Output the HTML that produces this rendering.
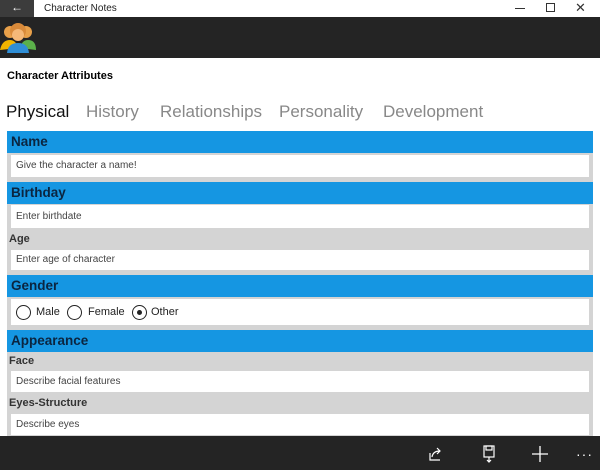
<!DOCTYPE html>
<html><head><style>
*{margin:0;padding:0;box-sizing:border-box}
body{width:600px;height:470px;overflow:hidden;background:#fff;font-family:"Liberation Sans",sans-serif;position:relative}
.a{position:absolute}
.hdr{position:absolute;left:7px;width:586px;background:#1596e2;color:#0b2540;font-weight:bold;font-size:13.5px;padding-left:4px;line-height:22px}
.gr{position:absolute;left:7px;width:586px;background:#d4d4d4}
.tb{position:absolute;left:11px;width:578px;background:#fff;font-size:10px;color:#444;padding-left:5px}
.lb{position:absolute;left:9px;font-size:11px;font-weight:bold;color:#333}
.tab{position:absolute;top:102px;font-size:17px;color:#888}
.rd{position:absolute;top:6px;width:15px;height:15px;border:1.5px solid #222;border-radius:50%}
.rt{position:absolute;top:0;font-size:11px;color:#222}
</style></head><body>
<div class="a" style="left:0;top:0;width:34px;height:17px;background:#3c3c3c;color:#fff;font-size:12px;text-align:center;line-height:15px">←</div>
<div class="a" style="left:44px;top:3px;font-size:10px;color:#222">Character Notes</div>
<div class="a" style="left:515px;top:8px;width:10px;height:1px;background:#333"></div>
<div class="a" style="left:546px;top:3px;width:9px;height:9px;border:1px solid #333"></div>
<div class="a" style="left:575px;top:0px;font-size:13px;color:#333">✕</div>
<div class="a" style="left:0;top:17px;width:600px;height:41px;background:#242424"></div>
<svg class="a" style="left:0;top:18px" width="38" height="38" viewBox="0 0 38 38">
<circle cx="10" cy="14" r="6" fill="#e8a04a"/><circle cx="26" cy="14" r="6" fill="#e8a04a"/>
<path d="M0 32 Q2 22 10 22 Q16 22 18 30Z" fill="#f0b400"/><path d="M20 30 Q22 22 28 22 Q36 22 36 32Z" fill="#5bb04a"/>
<circle cx="18" cy="13" r="8" fill="#d98a3a"/><circle cx="18" cy="17" r="6" fill="#f5b878"/>
<path d="M7 35 Q8 25 18 25 Q28 25 29 35Z" fill="#2f8ed6"/></svg>
<div class="a" style="left:7px;top:70px;font-size:11px;font-weight:bold;color:#000">Character Attributes</div>
<div class="tab" style="left:6px;color:#111">Physical</div>
<div class="tab" style="left:86px">History</div>
<div class="tab" style="left:160px">Relationships</div>
<div class="tab" style="left:279px">Personality</div>
<div class="tab" style="left:383px">Development</div>
<div class="gr" style="top:131px;height:305px"></div>
<div class="hdr" style="top:131px">Name</div>
<div class="tb" style="top:155px;height:22px;line-height:22px">Give the character a name!</div>
<div class="hdr" style="top:182px">Birthday</div>
<div class="tb" style="top:205px;height:23px;line-height:23px">Enter birthdate</div>
<div class="lb" style="top:233px">Age</div>
<div class="tb" style="top:250px;height:20px;line-height:20px">Enter age of character</div>
<div class="hdr" style="top:275px">Gender</div>
<div class="tb" style="top:299px;height:26px;line-height:27px;padding:0">
<span class="rd" style="left:5px"></span><span class="rt" style="left:25px">Male</span>
<span class="rd" style="left:56px"></span><span class="rt" style="left:77px">Female</span>
<span class="rd" style="left:121px"><span class="a" style="left:3.5px;top:3.5px;width:5px;height:5px;border-radius:50%;background:#222"></span></span><span class="rt" style="left:140px">Other</span></div>
<div class="hdr" style="top:330px">Appearance</div>
<div class="lb" style="top:355px">Face</div>
<div class="tb" style="top:371px;height:21px;line-height:21px">Describe facial features</div>
<div class="lb" style="top:397px">Eyes-Structure</div>
<div class="tb" style="top:414px;height:21px;line-height:21px">Describe eyes</div>
<div class="a" style="left:0;top:436px;width:600px;height:34px;background:#242424"></div>
<svg class="a" style="left:428px;top:446px" width="16" height="16" viewBox="0 0 16 16" fill="none" stroke="#fff" stroke-width="1.2"><path d="M2 7v7h10"/><path d="M4 11Q5 5 12 5M9 2l3 3-3 3"/></svg>
<svg class="a" style="left:482px;top:445px" width="14" height="18" viewBox="0 0 14 18" fill="none" stroke="#fff" stroke-width="1.2"><rect x="2" y="1" width="10" height="11"/><rect x="4" y="1" width="6" height="4"/><path d="M7 12v5M5 15l2 2 2-2"/></svg>
<svg class="a" style="left:532px;top:446px" width="16" height="16" stroke="#fff" stroke-width="1.3"><path d="M8 0v16M0 8h16"/></svg>
<div class="a" style="left:576px;top:446px;color:#fff;font-size:14px;letter-spacing:1px">···</div>
</body></html>
